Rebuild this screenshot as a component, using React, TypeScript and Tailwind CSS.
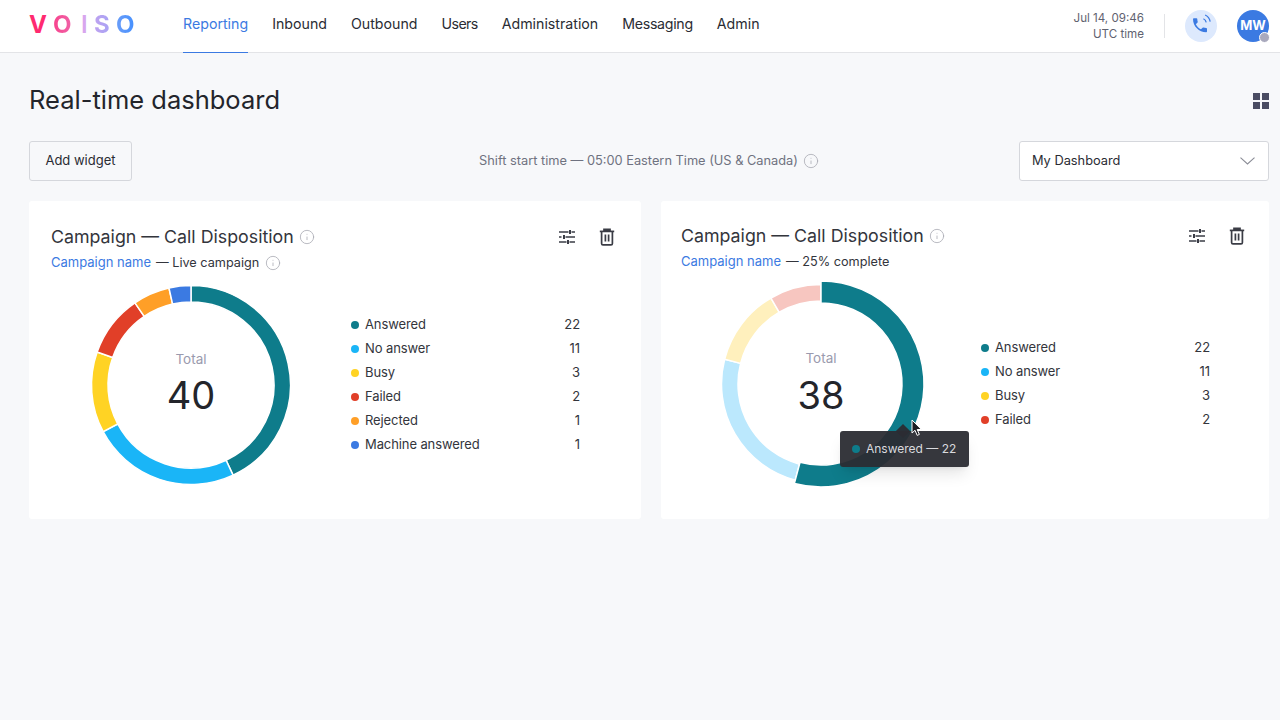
import React from "react";
import { Info } from "lucide-react";

const TEAL = "#0e7c8b";
const SKY = "#1ab5f7";
const YEL = "#ffd324";
const RED = "#e13f28";
const ORG = "#ff9f27";
const BLU = "#3b7ae2";

function pt(cx: number, cy: number, r: number, deg: number) {
  const a = ((deg - 90) * Math.PI) / 180;
  return [cx + r * Math.cos(a), cy + r * Math.sin(a)];
}
function arc(from: number, to: number, ro: number, ri: number) {
  const c = 100;
  const [x1, y1] = pt(c, c, ro, from);
  const [x2, y2] = pt(c, c, ro, to);
  const [x3, y3] = pt(c, c, ri, to);
  const [x4, y4] = pt(c, c, ri, from);
  const l = to - from > 180 ? 1 : 0;
  return `M${x1} ${y1}A${ro} ${ro} 0 ${l} 1 ${x2} ${y2}L${x3} ${y3}A${ri} ${ri} 0 ${l} 0 ${x4} ${y4}Z`;
}

type Seg = { from: number; to: number; color: string; ro?: number; ri?: number };

function Donut({ segs, total, numClass }: { segs: Seg[]; total: string; numClass: string }) {
  return (
    <div className="relative w-[200px] h-[200px] shrink-0">
      <svg width="200" height="200" viewBox="0 0 200 200" className="overflow-visible">
        {segs.map((s, i) => (
          <path key={i} d={arc(s.from, s.to, s.ro ?? 99.5, s.ri ?? 83)} fill={s.color} stroke="#fff" strokeWidth="1.5" />
        ))}
      </svg>
      <div className="absolute inset-0 flex flex-col items-center pt-[65px]">
        <span className="text-[13.5px] leading-[18px] text-[#9a9aae]">Total</span>
        <span className={`text-[38px] leading-[46px] text-[#23252b] ${numClass}`}>{total}</span>
      </div>
    </div>
  );
}

function Legend({ rows }: { rows: [string, string, number][] }) {
  return (
    <div className="w-[229px] flex flex-col">
      {rows.map(([color, label, n]) => (
        <div key={label} className="h-[24px] flex items-center text-[13px] tracking-[-0.1px] text-[#33353c]">
          <span className="w-[8px] h-[8px] rounded-full mr-[6px]" style={{ backgroundColor: color }} />
          <span className="flex-1">{label}</span>
          <span>{n}</span>
        </div>
      ))}
    </div>
  );
}

function Sliders() {
  return (
    <svg width="16" height="14" viewBox="0 0 16 14" fill="none" stroke="#3a3c45" strokeWidth="1.3" className="mt-[2px]">
      <path d="M0 2H9.5M12.5 2H16" />
      <path d="M0 7H2.5M6.5 7H16" />
      <path d="M0 12H7.5M10.5 12H16" />
      <path d="M11 0V4M5 5V9M9 10V14" strokeWidth="2" />
    </svg>
  );
}

function Trash() {
  return (
    <svg width="16" height="18" viewBox="0 0 16 18" fill="none" stroke="#3a3c45" strokeWidth="1.7">
      <path d="M0.8 3.4H15.2" />
      <path d="M5 3V1.4H11V3" fill="#3a3c45" />
      <path d="M2.6 3.4V15.4C2.6 16.2 3.2 16.8 4 16.8H12C12.8 16.8 13.4 16.2 13.4 15.4V3.4" />
      <path d="M6.4 6.6V13.6M9.6 6.6V13.6" />
    </svg>
  );
}

function Phone() {
  return (
    <svg width="18.67" height="18.67" viewBox="0 0 24 24" className="overflow-visible">
      <g transform="translate(-1.7 -1.5)">
        <path
          fill="#3b7ae2"
          d="M20 15.5c-1.25 0-2.45-.2-3.57-.57-.35-.11-.74-.03-1.02.24l-2.2 2.2c-2.83-1.44-5.15-3.75-6.59-6.59l2.2-2.21c.28-.26.36-.65.25-1C8.7 6.45 8.5 5.25 8.5 4c0-.55-.45-1-1-1H4c-.55 0-1 .45-1 1 0 9.39 7.61 17 17 17 .55 0 1-.45 1-1v-3.5c0-.55-.45-1-1-1z"
        />
      </g>
      <path d="M14.7 2.2A6.4 6.4 0 0 1 18.3 6.9" fill="none" stroke="#3b7ae2" strokeWidth="1.6" />
      <path d="M16.9 -2.5A11.6 11.6 0 0 1 23.4 6" fill="none" stroke="#3b7ae2" strokeWidth="1.6" />
    </svg>
  );
}

function Logo() {
  return (
    <div className="flex h-[32px] items-center text-[24px] leading-[32px] font-bold pt-[1px]">
      <span className="w-[24px] text-[#ff2a70]">V</span>
      <span className="w-[28px] bg-gradient-to-r from-[#f8418c] to-[#ea6fb6] bg-clip-text text-transparent">O</span>
      <span className="w-[13px] text-[#d8a6ee] font-semibold">I</span>
      <span className="w-[22px] bg-gradient-to-r from-[#bfa2f0] to-[#9ea3f6] bg-clip-text text-transparent">S</span>
      <span className="bg-gradient-to-r from-[#6a9df8] to-[#4390ff] bg-clip-text text-transparent">O</span>
    </div>
  );
}

function Card({
  className,
  sub,
  infoSub,
  iconsPad,
  children,
}: {
  className: string;
  sub: string;
  infoSub?: boolean;
  iconsPad: string;
  children: React.ReactNode;
}) {
  return (
    <div className={`bg-white rounded-[3px] ${className}`}>
      <div className={`flex justify-between ${iconsPad}`}>
        <div>
          <div className="flex items-center h-[24px] text-[17.8px] text-[#33353c]">
            Campaign — Call Disposition
            <Info size={16} strokeWidth={1.2} className="ml-[5px] text-[#a8aab2]" />
          </div>
          <div className="flex items-center h-[20px] mt-[4px] text-[13px] text-[#33353c]">
            <span className="text-[#3b7ae2]">Campaign name</span>
            <span className="ml-[5px] text-[12.7px]">{sub}</span>
            {infoSub && <Info size={16} strokeWidth={1.2} className="ml-[6px] text-[#a8aab2]" />}
          </div>
        </div>
        <div className="flex items-start gap-[24px] pt-[3px]">
          <Sliders />
          <Trash />
        </div>
      </div>
      {children}
    </div>
  );
}

export default function App() {
  return (
    <div className="w-[1280px] h-[720px] overflow-hidden bg-[#f7f8fa] font-['Inter',sans-serif] text-[#2a2c33]">
      <header className="h-[53px] bg-white border-b border-[#e3e4e7] flex pl-[29px] pr-[11px]">
        <div className="w-[154px] pt-[8px]">
          <Logo />
        </div>
        <nav className="flex gap-[24px] text-[14.2px]">
          <a className="h-[53px] flex items-center pb-[5px] border-b border-[#3b7ae2] text-[#3b7ae2]">Reporting</a>
          <a className="h-[53px] flex items-center pb-[5px] text-[#2a2c33]">Inbound</a>
          <a className="h-[53px] flex items-center pb-[5px] text-[#2a2c33]">Outbound</a>
          <a className="h-[53px] flex items-center pb-[5px] text-[#2a2c33] tracking-[-0.6px]">Users</a>
          <a className="h-[53px] flex items-center pb-[5px] text-[#2a2c33]">Administration</a>
          <a className="h-[53px] flex items-center pb-[5px] text-[#2a2c33] tracking-[-0.3px]">Messaging</a>
          <a className="h-[53px] flex items-center pb-[5px] text-[#2a2c33]">Admin</a>
        </nav>
        <div className="ml-auto flex items-center">
          <div className="text-right text-[11.6px] leading-[16px] text-[#5f6270]">
            <div>Jul 14, 09:46</div>
            <div>UTC time</div>
          </div>
          <div className="w-px h-[24px] bg-[#e3e4e7] ml-[20px] mr-[20px]" />
          <div className="w-[32px] h-[32px] rounded-full bg-[#dde9fd] flex items-center justify-center">
            <Phone />
          </div>
          <div className="relative w-[32px] h-[32px] ml-[20px] rounded-full bg-[#3b7ae2] flex items-center justify-center text-white text-[13px] font-bold">
            MW
            <span className="absolute right-[-1px] bottom-[-1px] w-[11px] h-[11px] rounded-full bg-[#a9a9bd] border-[1.5px] border-white" />
          </div>
        </div>
      </header>

      <main className="pl-[29px] pr-[11px]">
        <div className="flex justify-between h-[88px]">
          <h1 className="mt-[32px] h-[30px] text-[25.5px] leading-[30px] text-[#23252b]">Real-time dashboard</h1>
          <div className="mt-[40px] grid grid-cols-2 gap-[2px] w-[16px] h-[16px]">
            <span className="bg-[#4a4c63]" />
            <span className="bg-[#4a4c63]" />
            <span className="bg-[#4a4c63]" />
            <span className="bg-[#4a4c63]" />
          </div>
        </div>

        <div className="flex items-center justify-between">
          <button className="w-[103px] h-[40px] border border-[#d5d7dc] rounded-[3px] text-[13px] text-[#2a2c33] bg-[#f7f8fa]">
            Add widget
          </button>
          <div className="flex items-center text-[12.8px] text-[#6f7280] ml-[147px]">
            Shift start time — 05:00 Eastern Time (US &amp; Canada)
            <Info size={16} strokeWidth={1.2} className="ml-[5px] text-[#a8aab2]" />
          </div>
          <div className="w-[250px] h-[40px] bg-white border border-[#d5d7dc] rounded-[3px] flex items-center justify-between pl-[12px] pr-[13px] text-[12.8px] text-[#2a2c33]">
            My Dashboard
            <svg width="15" height="8" viewBox="0 0 15 8" fill="none" stroke="#8a8c96" strokeWidth="1.1">
              <path d="M0.5 0.7L7.5 7L14.5 0.7" />
            </svg>
          </div>
        </div>

        <div className="flex gap-[20px] mt-[20px]">
          <Card className="w-[612px] h-[318px] pl-[22px] pt-[24px]" sub="— Live campaign" infoSub iconsPad="pr-[26px]">
            <div className="flex items-center ml-[40px] mt-[12px] gap-[60px]">
              <Donut
                total="40"
                numClass="mt-[4px]"
                segs={[
                  { from: 0, to: 155, color: TEAL },
                  { from: 155, to: 242, color: SKY },
                  { from: 242, to: 289.4, color: YEL },
                  { from: 289.4, to: 325.7, color: RED },
                  { from: 325.7, to: 347.2, color: ORG },
                  { from: 347.2, to: 360, color: BLU },
                ]}
              />
              <Legend
                rows={[
                  [TEAL, "Answered", 22],
                  [SKY, "No answer", 11],
                  [YEL, "Busy", 3],
                  [RED, "Failed", 2],
                  [ORG, "Rejected", 1],
                  [BLU, "Machine answered", 1],
                ]}
              />
            </div>
          </Card>
          <Card className="w-[608px] h-[318px] pl-[20px] pt-[23px]" sub="— 25% complete" iconsPad="pr-[24px]">
            <div className="flex items-center ml-[40px] mt-[12px] gap-[60px]">
              <div className="relative">
                <Donut
                  total="38"
                  numClass="mt-[5px]"
                  segs={[
                    { from: 195, to: 284.4, color: "#bbe8fd" },
                    { from: 284.4, to: 329.8, color: "#fff0bd" },
                    { from: 329.8, to: 360, color: "#f7c6c0" },
                    { from: 0, to: 195, color: TEAL, ro: 103, ri: 81 },
                  ]}
                />
                <div className="absolute left-[119px] top-[147px] w-[129px] h-[36px] rounded-[3px] bg-[#2b2c33]/95 shadow-lg flex items-center pl-[12px] text-[12px] text-[#d9dade]">
                  <span className="absolute left-[58px] top-[-5px] w-[10px] h-[10px] rotate-45 bg-[#2b2c33]/95" />
                  <span className="w-[8px] h-[8px] rounded-full bg-[#0e7c8b] mr-[6px]" />
                  Answered — 22
                </div>
                <svg className="absolute left-[190px] top-[135px]" width="12" height="18" viewBox="0 0 12 18">
                  <path d="M1 1V14L4 11.3L6.2 16.4L8.4 15.4L6.2 10.5H10.4Z" fill="#1c1d22" stroke="#fff" strokeWidth="1" />
                </svg>
              </div>
              <Legend
                rows={[
                  [TEAL, "Answered", 22],
                  [SKY, "No answer", 11],
                  [YEL, "Busy", 3],
                  [RED, "Failed", 2],
                ]}
              />
            </div>
          </Card>
        </div>
      </main>
    </div>
  );
}
